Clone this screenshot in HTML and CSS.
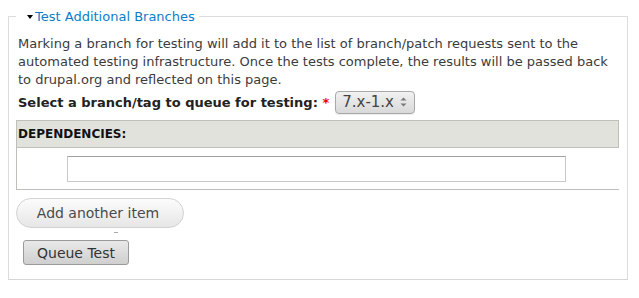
FILE: index.html
```html
<!DOCTYPE html>
<html>
<head>
<meta charset="utf-8">
<link rel="stylesheet" href="styles.css">
</head>
<body>
<fieldset class="branches">
  <legend class="legend"><span class="caret"></span><a class="legend-link">Test Additional Branches</a></legend>
  <div class="content">
    <p class="desc">Marking a branch for testing will add it to the list of branch/patch requests sent to the automated testing infrastructure. Once the tests complete, the results will be passed back to drupal.org and reflected on this page.</p>
    <div class="select-row">
      <label class="select-label">Select a branch/tag to queue for testing: <span class="req">*</span></label>
      <div class="select">
        <span class="select-value">7.x-1.x</span>
        <svg class="spin" width="7" height="12" viewBox="0 0 7 12"><path d="M0.5 4.5 L3.5 1.5 L6.5 4.5 Z" fill="#7a7a7a"/><path d="M0.5 7.5 L3.5 10.5 L6.5 7.5 Z" fill="#7a7a7a"/></svg>
      </div>
    </div>
    <div class="deps">
      <div class="deps-head"><span class="deps-title">DEPENDENCIES:</span></div>
      <div class="deps-row"><div class="text-input"></div></div>
    </div>
    <div class="add-row"><span class="btn-add">Add another item</span></div>
    <div class="tick"></div>
    <div class="queue-row"><span class="btn-queue">Queue Test</span></div>
  </div>
</fieldset>
</body>
</html>
```
FILE: styles.css
```css
html, body {
  margin: 0;
  padding: 0;
  background: #fff;
}
body {
  font-family: "DejaVu Sans", sans-serif;
  font-size: 13px;
  color: #3b3b3b;
}
.branches {
  margin: 9px 11px 0 8px;
  padding: 0 9px 14px 7px;
  border: 1px solid #dcdcdc;
  border-bottom-color: #d6d6d6;
  min-width: 0;
}
.legend {
  padding: 0 4px 0 11px;
  margin-left: 0;
  display: flex;
  align-items: center;
  font-size: 13px;
  line-height: 15px;
}
.caret {
  display: inline-block;
  width: 0;
  height: 0;
  border-left: 3.5px solid transparent;
  border-right: 3.5px solid transparent;
  border-top: 4px solid #000;
  margin-right: 2px;
  margin-top: 1px;
}
.legend-link {
  color: #0b7dc9;
}
.content {
  padding-top: 11px;
}
.desc {
  margin: 0 0 0 2px;
  line-height: 18px;
}
.select-row {
  display: flex;
  align-items: center;
  margin: 1px 0 0 2px;
  height: 24px;
}
.select-label {
  font-weight: bold;
  color: #222;
  margin-right: 6px;
}
.req {
  color: #e00;
}
.select {
  box-sizing: border-box;
  width: 80px;
  height: 23px;
  border: 1px solid #a8a8a8;
  border-radius: 4px;
  background: linear-gradient(#f1f1f1, #d9d9d9);
  display: flex;
  align-items: center;
  justify-content: space-between;
  padding: 0 7px 0 6px;
  box-shadow: 0 1px 1px rgba(0,0,0,0.08);
}
.select-value {
  font-size: 15px;
  color: #444;
}
.deps {
  margin-top: 6px;
  width: 603px;
}
.deps-head {
  box-sizing: border-box;
  height: 28px;
  background: #e1e2dc;
  border: 1px solid #bebfb9;
  display: flex;
  align-items: center;
  padding-left: 1px;
}
.deps-title {
  font-size: 12px;
  font-weight: bold;
  color: #111;
}
.deps-row {
  box-sizing: border-box;
  height: 42px;
  border-left: 1px solid #bebfb9;
  border-bottom: 1px solid #bebfb9;
  padding: 8px 0 0 50px;
}
.text-input {
  box-sizing: border-box;
  width: 499px;
  height: 26px;
  border: 1px solid #c8c8c8;
  border-top-color: #a0a0a0;
  background: #fff;
}
.add-row {
  margin-top: 8px;
  display: flex;
}
.btn-add {
  box-sizing: border-box;
  width: 168px;
  height: 30px;
  border: 1px solid #d2d2d2;
  border-radius: 16px;
  background: linear-gradient(#fcfcfc, #e6e6e6);
  display: flex;
  align-items: center;
  justify-content: center;
  color: #4a4a4a;
  font-size: 14px;
  padding-right: 4px;
}
.tick {
  width: 4px;
  height: 1px;
  background: #aaa;
  margin: 4px 0 0 98px;
}
.queue-row {
  margin-top: 7px;
  display: flex;
  padding-left: 7px;
}
.btn-queue {
  box-sizing: border-box;
  width: 106px;
  height: 25px;
  border: 1px solid #9a9a9a;
  border-radius: 3px;
  background: linear-gradient(#e9e9e9, #cfcfcf);
  display: flex;
  align-items: center;
  justify-content: center;
  color: #333;
  font-size: 14px;
}
```
